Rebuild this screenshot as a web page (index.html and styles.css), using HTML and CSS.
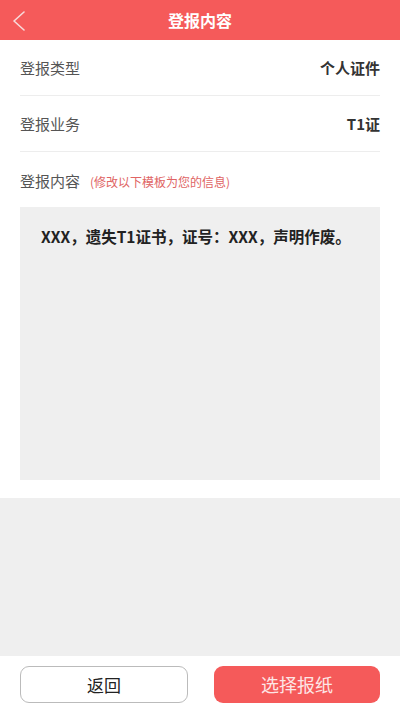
FILE: index.html
```html
<!DOCTYPE html>
<html lang="zh">
<head>
<meta charset="utf-8">
<link rel="stylesheet" href="styles.css">
</head>
<body>
<div class="page">
  <header class="topbar">
    <span class="back">
      <svg width="14" height="20" viewBox="0 0 14 20"><path d="M12 1 L2 10 L12 19" fill="none" stroke="#f7dada" stroke-width="1.6" stroke-linecap="round" stroke-linejoin="round"/></svg>
    </span>
    <h1 class="title">登报内容</h1>
  </header>
  <main class="card">
    <div class="row">
      <span class="label">登报类型</span>
      <span class="value">个人证件</span>
    </div>
    <div class="row">
      <span class="label">登报业务</span>
      <span class="value">T1证</span>
    </div>
    <div class="content">
      <div class="content-head">
        <span class="label">登报内容</span>
        <span class="hint">(修改以下模板为您的信息)</span>
      </div>
      <div class="textbox">XXX，遗失T1证书，证号：XXX，声明作废。</div>
    </div>
  </main>
  <div class="filler"></div>
  <footer class="footer">
    <button class="btn btn-back">返回</button>
    <button class="btn btn-primary">选择报纸</button>
  </footer>
</div>
</body>
</html>
```
FILE: styles.css
```css
* { box-sizing: border-box; }
html, body { margin: 0; padding: 0; }
body {
  font-family: "Noto Sans CJK SC", "Noto Sans", sans-serif;
  background: #efefef;
  width: 400px;
  height: 711px;
  overflow: hidden;
}
.page {
  display: flex;
  flex-direction: column;
  height: 711px;
}
.topbar {
  height: 40px;
  background: #f55a5a;
  display: flex;
  align-items: center;
  justify-content: center;
  position: relative;
}
.back {
  position: absolute;
  left: 12px;
  top: 11px;
  display: flex;
}
.title {
  margin: 0;
  color: #fff;
  font-size: 16px;
  font-weight: 700;
  line-height: 40px;
}
.card {
  background: #fff;
  padding: 0 20px 18px;
}
.row {
  height: 56px;
  display: flex;
  align-items: center;
  justify-content: space-between;
  border-bottom: 1px solid #ededed;
}
.label {
  font-size: 15px;
  color: #555;
}
.value {
  font-size: 15px;
  font-weight: 700;
  color: #333;
}
.content-head {
  height: 55px;
  display: flex;
  align-items: center;
  padding-top: 2px;
}
.hint {
  font-size: 12px;
  color: #e06464;
  margin-left: 10px;
  margin-top: 1px;
}
.textbox {
  background: #efefef;
  height: 273px;
  padding: 18px 21px;
  font-size: 15.5px;
  font-weight: 700;
  color: #222;
  line-height: 22px;
}
.filler { flex: 1; }
.footer {
  height: 55px;
  background: #fff;
  display: flex;
  align-items: center;
  gap: 26px;
  padding: 0 20px;
}
.btn {
  flex: 1;
  height: 37px;
  border-radius: 9px;
  font-family: "Noto Sans CJK SC", "Noto Sans", sans-serif;
  font-size: 17px;
  margin-top: 1px;
}
.btn-back {
  background: #fff;
  border: 1px solid #bbb;
  color: #222;
}
.btn-primary {
  background: #f55a5a;
  border: none;
  color: #fde6e6;
  font-size: 18px;
}
```
